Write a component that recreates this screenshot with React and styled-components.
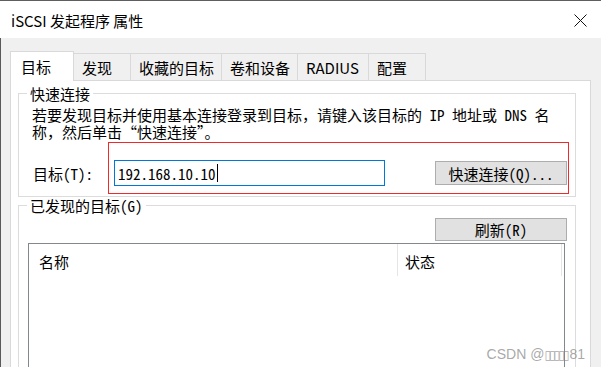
import styled, { createGlobalStyle } from "styled-components";

const GlobalStyle = createGlobalStyle`
  html, body {
    margin: 0;
    padding: 0;
    background: #ffffff;
    overflow: hidden;
  }
  * {
    box-sizing: border-box;
  }
`;

const UI_FONT = `"Noto Sans CJK SC", "Noto Sans", sans-serif`;
const FIXED_FONT = `"Noto Sans Mono CJK SC", "Noto Sans CJK SC", monospace`;

const tabs = [
  { label: "目标", width: 64, active: true },
  { label: "发现", width: 58 },
  { label: "收藏的目标", width: 92 },
  { label: "卷和设备", width: 77 },
  { label: "RADIUS", width: 72 },
  { label: "配置", width: 58 },
];

function App() {
  return (
    <Window>
      <GlobalStyle />
      <TitleBar>
        <Title>iSCSI 发起程序 属性</Title>
        <CloseIcon width="13" height="13" viewBox="0 0 13 13">
          <path d="M0.5 0.5 L12.5 12.5 M12.5 0.5 L0.5 12.5" stroke="#111" strokeWidth="1" fill="none" />
        </CloseIcon>
      </TitleBar>

      <Body>
        <TabStrip>
          {tabs.map((t) => (
            <Tab key={t.label} $active={t.active} $width={t.width}>
              {t.label}
            </Tab>
          ))}
        </TabStrip>

        <Panel>
          <Group $height={104}>
            <Legend>快速连接</Legend>
            <Description>
              <Line>若要发现目标并使用基本连接登录到目标，请键入该目标的 IP 地址或 DNS 名</Line>
              <Line>称，然后单击“快速连接”。</Line>
            </Description>
            <TargetRow>
              <FieldLabel>目标(T):</FieldLabel>
              <TextBox>
                192.168.10.10
                <Caret />
              </TextBox>
              <Button $width={132} $height={24}>快速连接(Q)...</Button>
            </TargetRow>
            <Highlight />
          </Group>

          <Group $top={8} $pad="12px 8px 0 9px">
            <Legend>已发现的目标(G)</Legend>
            <ButtonRow>
              <Button $width={132} $height={23}>刷新(R)</Button>
            </ButtonRow>
            <ListView>
              <ListHeader>
                <HeaderCell $width={369} $pad={10}>名称</HeaderCell>
                <HeaderCell $width={164} $pad={7}>状态</HeaderCell>
              </ListHeader>
            </ListView>
          </Group>
        </Panel>
      </Body>

      <Watermark>
        CSDN @<Tofu>▯▯▯▯▯</Tofu>81
      </Watermark>
    </Window>
  );
}

export default App;

const Window = styled.div`
  position: relative;
  width: 601px;
  height: 367px;
  overflow: hidden;
  display: flex;
  flex-direction: column;
  border-top: 1px solid #5e5e5e;
  background: #ffffff;
`;

const TitleBar = styled.div`
  height: 37px;
  flex: none;
  display: flex;
  align-items: center;
  justify-content: space-between;
  padding: 0 14px 0 11px;
  background: #ffffff;
`;

const Title = styled.span`
  font-family: ${UI_FONT};
  font-size: 15px;
  color: #000;
  line-height: 1;
  margin-top: 2px;
`;

const CloseIcon = styled.svg`
  display: block;
  margin-top: 2px;
`;

const Body = styled.div`
  flex: 1;
  display: flex;
  flex-direction: column;
  background: #f0f0f0;
  border-left: 1px solid #5a5a5a;
  padding: 13px 0 0 9px;
  min-height: 0;
`;

const TabStrip = styled.div`
  height: 30px;
  flex: none;
  display: flex;
  align-items: flex-end;
  margin-bottom: -1px;
  position: relative;
  z-index: 1;
`;

const Tab = styled.div`
  width: ${(p) => p.$width}px;
  height: ${(p) => (p.$active ? 30 : 28)}px;
  display: flex;
  align-items: center;
  padding-left: ${(p) => (p.$active ? 10 : 8)}px;
  font-family: ${UI_FONT};
  font-size: 15px;
  color: #000;
  background: ${(p) => (p.$active ? "#ffffff" : "#f0f0f0")};
  border: 1px solid #d9d9d9;
  border-bottom: ${(p) => (p.$active ? "none" : "1px solid #d9d9d9")};
  position: relative;
  z-index: ${(p) => (p.$active ? 2 : 1)};
  & + & {
    margin-left: -1px;
  }
`;

const Panel = styled.div`
  flex: 1;
  margin-right: 10px;
  background: #ffffff;
  border: 1px solid #d9d9d9;
  border-bottom: none;
  padding: 12px 14px 0 7px;
  display: flex;
  flex-direction: column;
`;

const Group = styled.div`
  position: relative;
  flex: none;
  height: ${(p) => (p.$height ? `${p.$height}px` : "auto")};
  margin-top: ${(p) => p.$top || 0}px;
  border: 1px solid #dcdcdc;
  padding: ${(p) => p.$pad || "12px 8px 0 13px"};
`;

const Legend = styled.span`
  position: absolute;
  top: -9px;
  left: 8px;
  padding: 0 3px;
  background: #ffffff;
  font-family: ${FIXED_FONT};
  font-size: 15px;
  line-height: 17px;
  color: #000;
  white-space: nowrap;
`;

const Description = styled.div`
  display: flex;
  flex-direction: column;
  font-family: ${FIXED_FONT};
  font-size: 15px;
  color: #000;
`;

const Line = styled.div`
  height: 17px;
  line-height: 17px;
  white-space: nowrap;
`;

const TargetRow = styled.div`
  display: flex;
  align-items: center;
  height: 26px;
  margin-top: 20px;
`;

const FieldLabel = styled.span`
  width: 82px;
  padding-left: 1px;
  font-family: ${FIXED_FONT};
  font-size: 15px;
  color: #000;
  white-space: nowrap;
`;

const TextBox = styled.div`
  width: 271px;
  height: 26px;
  display: flex;
  align-items: center;
  padding-left: 3px;
  border: 1px solid #0078d7;
  background: #ffffff;
  font-family: ${FIXED_FONT};
  font-size: 15px;
  color: #000;
  white-space: nowrap;
`;

const Caret = styled.span`
  display: inline-block;
  width: 1px;
  height: 18px;
  margin-left: 1px;
  background: #000;
`;

const Button = styled.div`
  width: ${(p) => p.$width}px;
  height: ${(p) => p.$height}px;
  margin-left: auto;
  display: flex;
  align-items: center;
  justify-content: center;
  background: #e1e1e1;
  border: 1px solid #adadad;
  font-family: ${FIXED_FONT};
  font-size: 15px;
  color: #000;
  white-space: nowrap;
`;

const Highlight = styled.div`
  position: absolute;
  left: 89px;
  top: 48px;
  width: 461px;
  height: 52px;
  border: 1px solid #ee2a2a;
  pointer-events: none;
`;

const ButtonRow = styled.div`
  display: flex;
  justify-content: flex-end;
`;

const ListView = styled.div`
  height: 200px;
  margin: 2px 2px 0 0;
  border: 1px solid #828790;
  background: #ffffff;
`;

const ListHeader = styled.div`
  display: flex;
  height: 32px;
`;

const HeaderCell = styled.div`
  width: ${(p) => p.$width}px;
  display: flex;
  align-items: center;
  padding: 3px 0 0 ${(p) => p.$pad}px;
  border-right: 1px solid #e5e5e5;
  font-family: ${UI_FONT};
  font-size: 15px;
  color: #000;
`;

const Watermark = styled.div`
  position: absolute;
  right: 16px;
  bottom: 5px;
  font-family: "Liberation Sans", "DejaVu Sans", sans-serif;
  font-size: 14px;
  color: rgba(130, 130, 130, 0.7);
  white-space: nowrap;
  pointer-events: none;
`;

const Tofu = styled.span`
  font-family: "DejaVu Sans", sans-serif;
  font-size: 12px;
  letter-spacing: -2px;
  margin-right: 2px;
`;
